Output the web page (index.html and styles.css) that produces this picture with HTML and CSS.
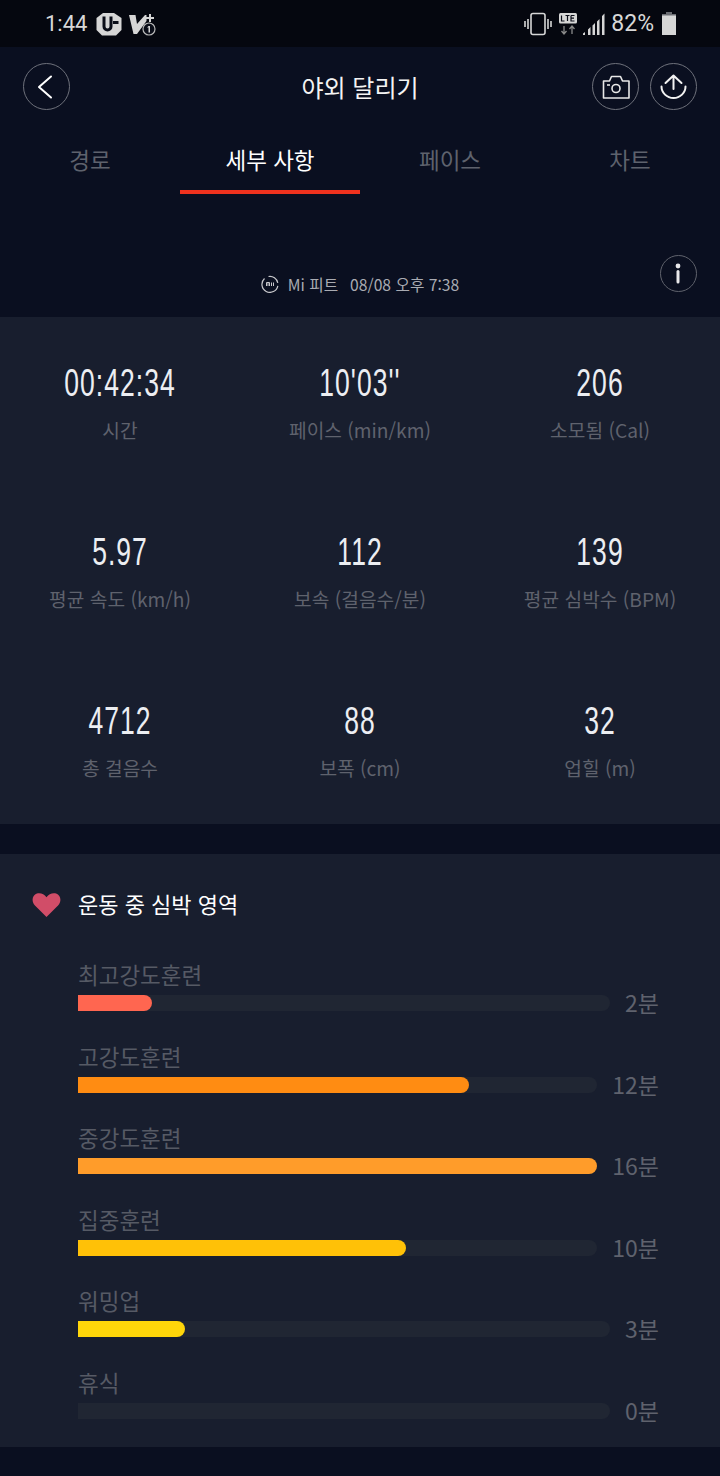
FILE: index.html
```html
<!DOCTYPE html>
<html lang="ko">
<head>
<meta charset="utf-8">
<title>야외 달리기</title>
<link rel="stylesheet" href="styles.css">
</head>
<body>
<div class="status">
  <div class="status-left">
    <span class="clock">1:44</span>
    <svg class="ic-u" width="26" height="24" viewBox="0 0 26 24"><path d="M7 1h11l7.500 5v12l-5.500 5.500H6L.5 18V6z" fill="#d6d6d6"/><path d="M6.500 4.500v10a5 5 0 0 0 10 0v-10h-3v10a2 2 0 0 1-4 0v-10z" fill="#0a0d18"/><path d="M17 9h5.500v3H17z" fill="#0a0d18"/></svg>
    <svg class="ic-v" width="28" height="24" viewBox="0 0 28 24"><path d="M0 3h6.500L8 12l8-9h1.500v6L8 22H4.500z" fill="#d6d6d6"/><path d="M20 2h2v3h3v2h-3v3h-2V7h-3V5h3z" fill="#d6d6d6"/><circle cx="20" cy="17" r="6" fill="#0a0d18" stroke="#b8b8b8" stroke-width="1.200"/><path d="M19.500 14h1.500v6.500h-1.500zM18 15.500l1.500-1.500v1.500z" fill="#d6d6d6"/></svg>
  </div>
  <div class="status-right">
    <svg width="28" height="24" viewBox="0 0 28 24" fill="none" stroke="#d6d6d6" stroke-width="1.600"><rect x="7" y="1.500" width="14" height="21" rx="2"/><path d="M4 7v10M1 9v6M24 7v10M27 9v6"/></svg>
    <svg class="ic-lte" width="18" height="24" viewBox="0 0 18 24"><rect x="0" y="1" width="18" height="10.500" rx="1.500" fill="#d6d6d6"/><path d="M2.500 3.500v5.500h3M6.500 3.500h4M8.500 3.500v5.500M12 3.500v5.500h3.500M12 3.500h3.500M12 6.200h3" stroke="#0a0d18" stroke-width="1.200" fill="none"/><path d="M5 14v8M2.500 19l2.500 3 2.500-3M13 22v-8M10.500 17l2.500-3 2.500 3" stroke="#8a8a8a" stroke-width="1.300" fill="none"/></svg>
    <svg class="ic-sig" width="22" height="24" viewBox="0 0 22 24" fill="#d6d6d6"><path d="M0 23h2v-3l-2 1.500zM5 23h2.500v-8L5 17.500zM9.500 23H12V11l-2.500 2.500zM14 23h2.500V7L14 9.500zM19 23h2.500V1.500L19 4z"/></svg>
    <span class="pct">82%</span>
    <svg class="ic-bat" width="14" height="23" viewBox="0 0 14 23"><path d="M4.500 0h5v2h4.500v21H0V2h4.500z" fill="#d6d6d6"/><path d="M4.500 0h5v2h4.500v1.500H0V2h4.500z" fill="#6a6c72"/></svg>
  </div>
</div>

<header class="top">
  <button class="round">
    <svg width="47" height="47" viewBox="0 0 47 47" fill="none" stroke="#fff" stroke-width="2" stroke-linecap="round" stroke-linejoin="round"><path d="M28 13.500L16 24l12 10.500"/></svg>
  </button>
  <h1 class="title">야외 달리기</h1>
  <div class="top-actions">
    <button class="round">
      <svg width="47" height="47" viewBox="0 0 47 47" fill="none" stroke="#e8e8e8" stroke-width="1.600" stroke-linejoin="round"><path d="M11.500 18h6l2-4.500h9l2 4.500h6.500v17h-25.500z"/><circle cx="24" cy="25.500" r="4"/><path d="M15 22h3"/></svg>
    </button>
    <button class="round">
      <svg width="47" height="47" viewBox="0 0 47 47" fill="none" stroke="#f2f2f2" stroke-width="2" stroke-linecap="round" stroke-linejoin="round"><path d="M23.500 26V12.500M15.500 20l8-7.500 8 7.500"/><path d="M11.500 23.500a12 11.500 0 0 0 24 0"/></svg>
    </button>
  </div>
</header>

<nav class="tabs">
  <div class="tab">경로</div>
  <div class="tab active">세부 사항</div>
  <div class="tab">페이스</div>
  <div class="tab">차트</div>
</nav>

<div class="source">
  <div class="source-text">
    <svg width="18" height="18" viewBox="0 0 18 18" fill="none" stroke="#c8c8cc" stroke-width="1.200"><path d="M3.500 3.500a8 8 0 1 0 4-2" stroke-dasharray="30 3"/><path d="M5.500 11V7.500h3V11M7 8v3M10.500 7.500V11M12.500 7.500V11" stroke-width="1"/></svg>
    <span class="device">Mi 피트</span>
    <span>08/08 오후 7:38</span>
  </div>
  <button class="info">
    <svg width="37" height="37" viewBox="0 0 37 37" fill="#e8e8ea"><circle cx="18" cy="11" r="2.400"/><rect x="16.500" y="15" width="3" height="13.500" rx="1.500"/></svg>
  </button>
</div>

<section class="card stats">
  <div class="stat"><div class="num">00:42:34</div><div class="cap">시간</div></div>
  <div class="stat"><div class="num">10'03''</div><div class="cap">페이스 (min/km)</div></div>
  <div class="stat"><div class="num">206</div><div class="cap">소모됨 (Cal)</div></div>
  <div class="stat"><div class="num">5.97</div><div class="cap">평균 속도 (km/h)</div></div>
  <div class="stat"><div class="num">112</div><div class="cap">보속 (걸음수/분)</div></div>
  <div class="stat"><div class="num">139</div><div class="cap">평균 심박수 (BPM)</div></div>
  <div class="stat"><div class="num">4712</div><div class="cap">총 걸음수</div></div>
  <div class="stat"><div class="num">88</div><div class="cap">보폭 (cm)</div></div>
  <div class="stat"><div class="num">32</div><div class="cap">업힐 (m)</div></div>
</section>

<section class="card zones">
  <div class="zones-head">
    <svg width="29" height="25" viewBox="0 0 30 26"><path d="M15 26L3 14C-1 10 0 3 5 1.500c4-1 7.500 .5 10 4 2.500-3.500 6-5 10-4 5 1.500 6 8.500 2 12.500z" fill="#d14d68"/></svg>
    <h2>운동 중 심박 영역</h2>
  </div>
  <div class="zone">
    <div class="zone-name">최고강도훈련</div>
    <div class="zone-row"><div class="track"><div class="fill c1" style="width:74px"></div></div><span class="mins">2분</span></div>
  </div>
  <div class="zone">
    <div class="zone-name">고강도훈련</div>
    <div class="zone-row"><div class="track"><div class="fill c2" style="width:391px"></div></div><span class="mins">12분</span></div>
  </div>
  <div class="zone">
    <div class="zone-name">중강도훈련</div>
    <div class="zone-row"><div class="track"><div class="fill c3" style="width:100%"></div></div><span class="mins">16분</span></div>
  </div>
  <div class="zone">
    <div class="zone-name">집중훈련</div>
    <div class="zone-row"><div class="track"><div class="fill c4" style="width:328px"></div></div><span class="mins">10분</span></div>
  </div>
  <div class="zone">
    <div class="zone-name">워밍업</div>
    <div class="zone-row"><div class="track"><div class="fill c5" style="width:107px"></div></div><span class="mins">3분</span></div>
  </div>
  <div class="zone">
    <div class="zone-name">휴식</div>
    <div class="zone-row"><div class="track"></div><span class="mins">0분</span></div>
  </div>
</section>
</body>
</html>
```
FILE: styles.css
```css
* { box-sizing: border-box; }
html, body { margin: 0; padding: 0; }
body {
  width: 720px;
  height: 1476px;
  overflow: hidden;
  background: #0a0f20;
  color: #fff;
  font-family: "Noto Sans CJK KR", "Noto Sans", sans-serif;
}
svg { display: block; flex: none; }
button { padding: 0; margin: 0; background: none; border: 0; }

.status {
  height: 47px;
  background: #05070f;
  display: flex;
  justify-content: space-between;
  align-items: center;
  padding: 0 44px 0 45px;
  color: #d8d8d8;
  font-family: "Roboto", sans-serif;
  font-size: 22px;
}
.status-left, .status-right { display: flex; align-items: center; }
.status-left .clock { margin-right: 9px; }
.ic-v { margin-left: 7px; }
.ic-lte { margin-left: 7px; }
.ic-sig { margin-left: 6px; }
.pct { margin-left: 6px; margin-right: 8px; font-size: 23px; }

.top {
  height: 79px;
  padding: 16px 23px 0;
  display: flex;
  justify-content: space-between;
  position: relative;
}
.round {
  width: 47px;
  height: 47px;
  border: 1px solid #6e717b;
  border-radius: 50%;
}
.round svg { margin: -1px; }
.title {
  margin: 0;
  position: absolute;
  left: 0;
  right: 0;
  top: 19px;
  text-align: center;
  font-size: 24px;
  font-weight: 400;
  line-height: 42px;
  color: #f4f4f4;
}
.top-actions { display: flex; gap: 11px; }

.tabs {
  display: grid;
  grid-template-columns: repeat(4, 180px);
  height: 68px;
}
.tab {
  text-align: center;
  font-size: 22.500px;
  line-height: 66px;
  color: #5e626d;
  height: 68px;
}
.tab.active {
  color: #fff;
  border-bottom: 4px solid #f0321e;
}

.source {
  height: 123px;
  display: flex;
  justify-content: center;
  position: relative;
  padding-top: 79px;
}
.source-text {
  display: flex;
  align-items: center;
  height: 22px;
  font-size: 15.700px;
  color: #a9abb2;
}
.device { margin: 0 12px 0 9px; }
.info {
  position: absolute;
  right: 23px;
  top: 61px;
  width: 37px;
  height: 37px;
  border: 1.500px solid #5f626c;
  border-radius: 50%;
}
.info svg { margin: -1.500px; }

.card { background: #181e2e; }

.stats {
  height: 507px;
  display: grid;
  grid-template-columns: repeat(3, 240px);
  grid-auto-rows: 169px;
  padding-top: 41px;
}
.stat { text-align: center; }
.num {
  font-family: "Liberation Sans", sans-serif;
  font-size: 39px;
  line-height: 50px;
  letter-spacing: 1.500px;
  color: #eceef2;
  transform: scaleX(0.68);
}
.cap {
  margin-top: 7px;
  font-size: 19.200px;
  line-height: 30px;
  color: #5f626d;
}

.zones {
  margin-top: 30px;
  height: 593px;
  padding: 28px 61px 0 78px;
}
.zones-head {
  height: 42px;
  display: flex;
  align-items: center;
  position: relative;
  margin-bottom: 37px;
}
.zones-head svg { position: absolute; left: -46px; top: 10px; }
.zones-head h2 {
  margin: 0;
  font-size: 22px;
  font-weight: 400;
  color: #fff;
}
.zone { height: 81.600px; }
.zone-name {
  font-size: 22.500px;
  line-height: 26px;
  height: 34px;
  color: #565a65;
}
.zone-row {
  display: flex;
  align-items: center;
  gap: 15px;
  height: 16px;
}
.track {
  flex: 1;
  height: 16px;
  background: #202633;
  border-radius: 0 8px 8px 0;
}
.fill { height: 16px; border-radius: 0 8px 8px 0; }
.c1 { background: #ff6650; }
.c2 { background: #ff8c12; }
.c3 { background: #ff9c2a; }
.c4 { background: #ffc107; }
.c5 { background: #ffd60a; }
.mins {
  font-size: 23px;
  line-height: 16px;
  color: #5f626d;
  position: relative;
  top: -1px;
}
```
